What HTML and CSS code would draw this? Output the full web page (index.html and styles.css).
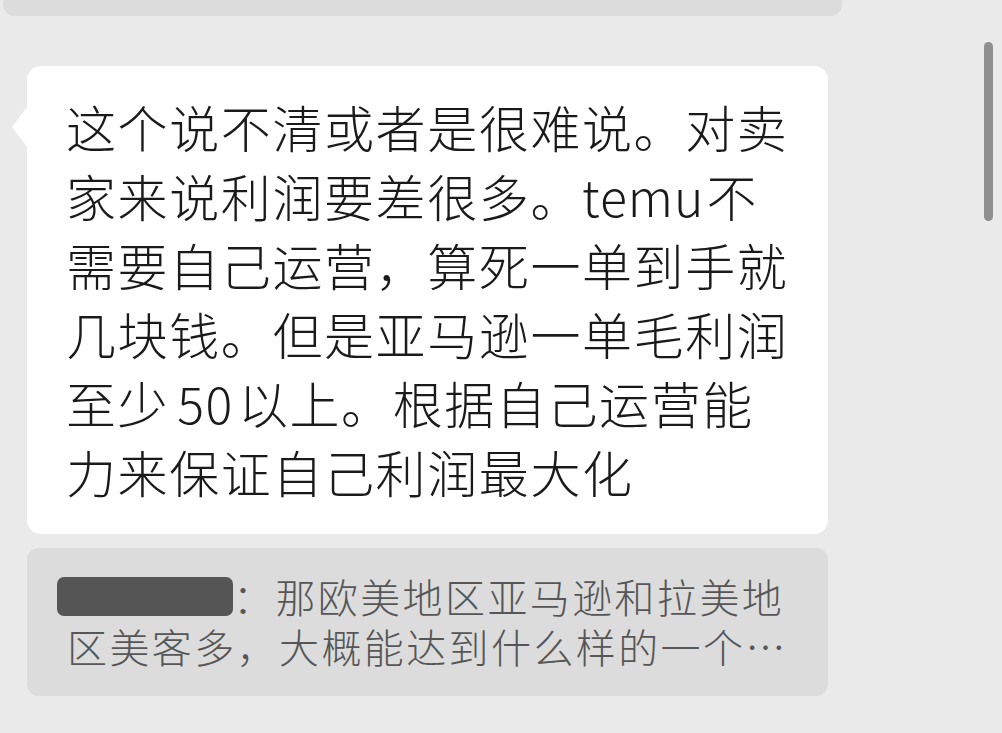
FILE: index.html
```html
<!DOCTYPE html>
<html lang="zh-CN">
<head>
<meta charset="utf-8">
<title>聊天</title>
<link rel="stylesheet" href="styles.css">
</head>
<body>
<div class="chat">
  <div class="prev-quote"></div>
  <div class="bubble">
    <p class="msg">这个说不清或者是很难说。对卖<br>家来说利润要差很多。<span class="latin">temu</span>不<br>需要自己运营，算死一单到手就<br>几块钱。但是亚马逊一单毛利润<br>至少<span class="num">50</span>以上。根据自己运营能<br>力来保证自己利润最大化</p>
  </div>
  <div class="quote">
    <p class="quote-text"><span class="redact"></span>：那欧美地区亚马逊和拉美地</p>
    <p class="quote-text">区美客多，大概能达到什么样的一个…</p>
  </div>
</div>
<div class="scrollbar"></div>
</body>
</html>
```

FILE: styles.css
```css
html, body {
  margin: 0;
  padding: 0;
  background: #eaeaea;
  width: 1002px;
  height: 733px;
  overflow: hidden;
  font-family: "Noto Sans CJK SC", "Noto Sans", sans-serif;
}

.chat {
  display: flex;
  flex-direction: column;
  align-items: flex-start;
}

.prev-quote {
  margin-left: 3px;
  width: 839px;
  height: 16px;
  background: #dcdcdc;
  border-radius: 0 0 12px 12px;
}

.bubble {
  position: relative;
  margin-top: 50px;
  margin-left: 27px;
  width: 801px;
  box-sizing: border-box;
  padding: 26px 20px 28px 39px;
  background: #ffffff;
  border-radius: 14px;
}

.bubble::before {
  content: "";
  position: absolute;
  left: -15px;
  top: 40px;
  width: 16px;
  height: 42px;
  background: #ffffff;
  clip-path: polygon(100% 0, 0 50%, 100% 100%);
}

.msg {
  margin: 0;
  font-size: 50px;
  font-weight: 300;
  line-height: 69px;
  letter-spacing: 1.6px;
  color: #1a1a1a;
  white-space: nowrap;
}

.latin {
  letter-spacing: 1px;
  margin-right: 2px;
}

.num {
  margin-left: 8px;
  margin-right: 4px;
}

.quote {
  margin-top: 14px;
  margin-left: 27px;
  width: 801px;
  box-sizing: border-box;
  padding: 27px 20px 21px 40px;
  background: #dcdcdc;
  border-radius: 12px;
}

.quote-text {
  margin: 0;
  height: 50px;
  font-size: 40px;
  font-weight: 300;
  line-height: 42px;
  letter-spacing: 2.4px;
  color: #565656;
  white-space: nowrap;
}

.redact {
  display: inline-block;
  vertical-align: top;
  margin-top: 2px;
  margin-left: -10px;
  width: 176px;
  height: 39px;
  background: #555555;
  border-radius: 7px;
}

.scrollbar {
  position: absolute;
  top: 42px;
  right: 9px;
  width: 9px;
  height: 179px;
  background: #8f8f8f;
  border-radius: 5px;
}
```
